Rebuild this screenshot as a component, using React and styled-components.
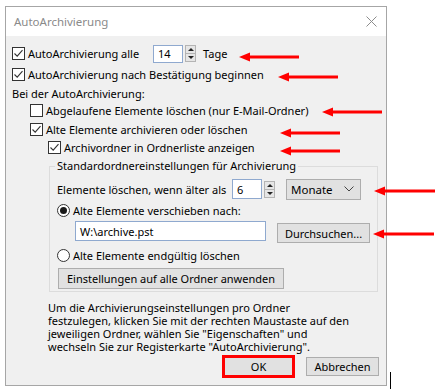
import React from "react";
import styled, { createGlobalStyle } from "styled-components";

const GlobalStyle = createGlobalStyle`
  html, body {
    margin: 0;
    padding: 0;
    background: #ffffff;
  }
  body {
    font-family: "Noto Sans", "Open Sans", sans-serif;
    font-size: 11px;
    color: #000000;
  }
`;

const arrows = [
  { tip: 239, tail: 299, y: 57 },
  { tip: 278, tail: 338, y: 77 },
  { tip: 322, tail: 382, y: 112 },
  { tip: 280, tail: 340, y: 133 },
  { tip: 280, tail: 340, y: 151 },
  { tip: 374, tail: 435, y: 191 },
  { tip: 373, tail: 434, y: 234 },
];

const Check = ({ checked }) => (
  <CheckBox>
    {checked && (
      <svg width="11" height="11" viewBox="0 0 11 11">
        <path d="M1.5 5.5 L4.2 8.2 L9.5 2.2" fill="none" stroke="#333" strokeWidth="1.1" />
      </svg>
    )}
  </CheckBox>
);

const Spin = () => (
  <Spinner>
    <SpinHalf>
      <TriUp />
    </SpinHalf>
    <SpinHalf $bottom>
      <TriDown />
    </SpinHalf>
  </Spinner>
);

const Arrow = ({ tip, tail, y }) => (
  <ArrowBox style={{ left: tip, top: y - 5, width: tail - tip }}>
    <svg width={tail - tip} height="10" viewBox={`0 0 ${tail - tip} 10`}>
      <rect x="8" y="3.5" width={tail - tip - 8} height="3" fill="#ff0000" />
      <polygon points="0,5 11,0.5 11,9.5" fill="#ff0000" />
    </svg>
  </ArrowBox>
);

export default function App() {
  return (
    <>
      <GlobalStyle />
      <Page>
        <Window>
          <TitleBar>
            <Title>AutoArchivierung</Title>
            <CloseIcon>
              <svg width="11" height="11" viewBox="0 0 11 11">
                <path d="M0.5 0.5 L10.5 10.5 M10.5 0.5 L0.5 10.5" stroke="#8c8c8c" strokeWidth="1" />
              </svg>
            </CloseIcon>
          </TitleBar>
          <Body>
            <Row $h={19}>
              <Item $w={141}>
                <Check checked />
                <Label>AutoArchivierung alle</Label>
              </Item>
              <TextBox $w={30} $h={18}>14</TextBox>
              <Spin />
              <Label $ml={7}>Tage</Label>
            </Row>
            <Row $h={22}>
              <Check checked />
              <Label>AutoArchivierung nach Bestätigung beginnen</Label>
            </Row>
            <Row $h={16}>
              <Text>Bei der AutoArchivierung:</Text>
            </Row>
            <Row $h={18} $indent={18}>
              <Check />
              <Label>Abgelaufene Elemente löschen (nur E-Mail-Ordner)</Label>
            </Row>
            <Row $h={20} $indent={18}>
              <Check checked />
              <Label>Alte Elemente archivieren oder löschen</Label>
            </Row>
            <Row $h={17} $indent={36}>
              <Check checked />
              <Label>Archivordner in Ordnerliste anzeigen</Label>
            </Row>
            <Group>
              <Legend>Standardordnereinstellungen für Archivierung</Legend>
              <Row $h={20}>
                <Item $w={175}>
                  <Text>Elemente löschen, wenn älter als</Text>
                </Item>
                <TextBox $w={30} $h={20}>6</TextBox>
                <Spin />
                <Dropdown>
                  <span>Monate</span>
                  <svg width="10" height="6" viewBox="0 0 10 6">
                    <path d="M0.5 0.5 L5 5 L9.5 0.5" fill="none" stroke="#444" strokeWidth="1" />
                  </svg>
                </Dropdown>
              </Row>
              <Row $h={22}>
                <Radio $checked />
                <Label>Alte Elemente verschieben nach:</Label>
              </Row>
              <Row $h={22} $top>
                <TextBox $w={191} $h={20} $ml={18}>W:\archive.pst</TextBox>
                <Button $w={93} $h={20} $ml={11} $mt={2}>Durchsuchen...</Button>
              </Row>
              <Row $h={25}>
                <Radio />
                <Label>Alte Elemente endgültig löschen</Label>
              </Row>
              <Row $h={21} $top>
                <Button $w={226} $h={21} $ml={1}>Einstellungen auf alle Ordner anwenden</Button>
              </Row>
            </Group>
            <Paragraph>
              <Line>Um die Archivierungseinstellungen pro Ordner</Line>
              <Line>festzulegen, klicken Sie mit der rechten Maustaste auf den</Line>
              <Line>jeweiligen Ordner, wählen Sie "Eigenschaften" und</Line>
              <Line>wechseln Sie zur Registerkarte "AutoArchivierung".</Line>
            </Paragraph>
            <Footer>
              <Button $w={73} $h={23} $focus>OK</Button>
              <Button $w={73} $h={19} $ml={11}>Abbrechen</Button>
            </Footer>
          </Body>
        </Window>
        {arrows.map((a, i) => (
          <Arrow key={i} {...a} />
        ))}
        <Cursor />
      </Page>
    </>
  );
}

const Page = styled.div`
  position: relative;
  width: 439px;
  height: 389px;
  padding: 6px 0 0 5px;
  box-sizing: border-box;
  overflow: hidden;
`;

const Window = styled.div`
  width: 382px;
  height: 380px;
  box-sizing: border-box;
  border: 1px solid #a6a6a6;
  display: flex;
  flex-direction: column;
  background: #f0f0f0;
`;

const TitleBar = styled.div`
  height: 29px;
  background: #ffffff;
  display: flex;
  align-items: center;
  justify-content: space-between;
  padding: 0 9px 0 8px;
  flex-shrink: 0;
`;

const Title = styled.span`
  font-size: 11.5px;
  color: #8a8a8a;
`;

const CloseIcon = styled.span`
  display: flex;
  width: 11px;
  height: 11px;
`;

const Body = styled.div`
  flex: 1;
  display: flex;
  flex-direction: column;
  padding: 8px 7px 0 6px;
`;

const Row = styled.div`
  display: flex;
  align-items: ${(p) => (p.$top ? "flex-start" : "center")};
  height: ${(p) => p.$h}px;
  padding-left: ${(p) => p.$indent || 0}px;
  flex-shrink: 0;
`;

const Item = styled.div`
  display: flex;
  align-items: center;
  width: ${(p) => p.$w}px;
  flex-shrink: 0;
`;

const CheckBox = styled.span`
  width: 13px;
  height: 13px;
  box-sizing: border-box;
  border: 1px solid #333333;
  background: #ffffff;
  display: flex;
  align-items: center;
  justify-content: center;
  flex-shrink: 0;
`;

const Radio = styled.span`
  width: 13px;
  height: 13px;
  box-sizing: border-box;
  border: 1px solid #333333;
  border-radius: 50%;
  background: #ffffff;
  flex-shrink: 0;
  position: relative;
  &::after {
    content: "";
    display: ${(p) => (p.$checked ? "block" : "none")};
    position: absolute;
    left: 2px;
    top: 2px;
    width: 7px;
    height: 7px;
    border-radius: 50%;
    background: #1a1a1a;
  }
`;

const Label = styled.span`
  margin-left: ${(p) => (p.$ml !== undefined ? p.$ml : 3)}px;
  white-space: nowrap;
`;

const Text = styled.span`
  white-space: nowrap;
`;

const TextBox = styled.div`
  width: ${(p) => p.$w}px;
  height: ${(p) => p.$h}px;
  margin-left: ${(p) => p.$ml || 0}px;
  box-sizing: border-box;
  border: 1px solid #8fa9cf;
  background: #ffffff;
  display: flex;
  align-items: center;
  padding-left: 4px;
  flex-shrink: 0;
`;

const Spinner = styled.div`
  width: 11px;
  height: 17px;
  margin-left: 2px;
  box-sizing: border-box;
  border: 1px solid #b4b4b4;
  background: #e6e6e6;
  display: flex;
  flex-direction: column;
  flex-shrink: 0;
`;

const SpinHalf = styled.div`
  flex: 1;
  display: flex;
  align-items: center;
  justify-content: center;
  border-top: ${(p) => (p.$bottom ? "1px solid #b4b4b4" : "none")};
`;

const TriUp = styled.span`
  width: 0;
  height: 0;
  border-left: 3px solid transparent;
  border-right: 3px solid transparent;
  border-bottom: 3px solid #222;
`;

const TriDown = styled.span`
  width: 0;
  height: 0;
  border-left: 3px solid transparent;
  border-right: 3px solid transparent;
  border-top: 3px solid #222;
`;

const Dropdown = styled.div`
  width: 75px;
  height: 21px;
  margin-left: 11px;
  box-sizing: border-box;
  border: 1px solid #adadad;
  background: #e1e1e1;
  display: flex;
  align-items: center;
  justify-content: space-between;
  padding: 0 6px 0 4px;
  font-size: 11.5px;
  flex-shrink: 0;
`;

const Group = styled.fieldset`
  margin: 2px 0 0 37px;
  width: 329px;
  box-sizing: border-box;
  border: 1px solid #dcdcdc;
  padding: 5px 0 2px 7px;
  min-width: 0;
`;

const Legend = styled.legend`
  padding: 0 2px;
  margin-left: -2px;
  line-height: 16px;
`;

const Button = styled.div`
  width: ${(p) => p.$w}px;
  height: ${(p) => p.$h}px;
  margin-left: ${(p) => p.$ml || 0}px;
  margin-top: ${(p) => p.$mt || 0}px;
  box-sizing: border-box;
  border: ${(p) => (p.$focus ? "3px solid #ff0000" : "1px solid #adadad")};
  background: #e1e1e1;
  display: flex;
  align-items: center;
  justify-content: center;
  white-space: nowrap;
  flex-shrink: 0;
`;

const Paragraph = styled.div`
  margin: 9px 0 0 36px;
  display: flex;
  flex-direction: column;
`;

const Line = styled.span`
  display: block;
  height: 13px;
  line-height: 13px;
  white-space: nowrap;
`;

const Footer = styled.div`
  display: flex;
  align-items: center;
  justify-content: flex-end;
  height: 23px;
  margin-top: 2px;
`;

const ArrowBox = styled.div`
  position: absolute;
  height: 10px;
  display: flex;
`;

const Cursor = styled.div`
  position: absolute;
  left: 390px;
  top: 372px;
  width: 1px;
  height: 17px;
  background: #000000;
`;
